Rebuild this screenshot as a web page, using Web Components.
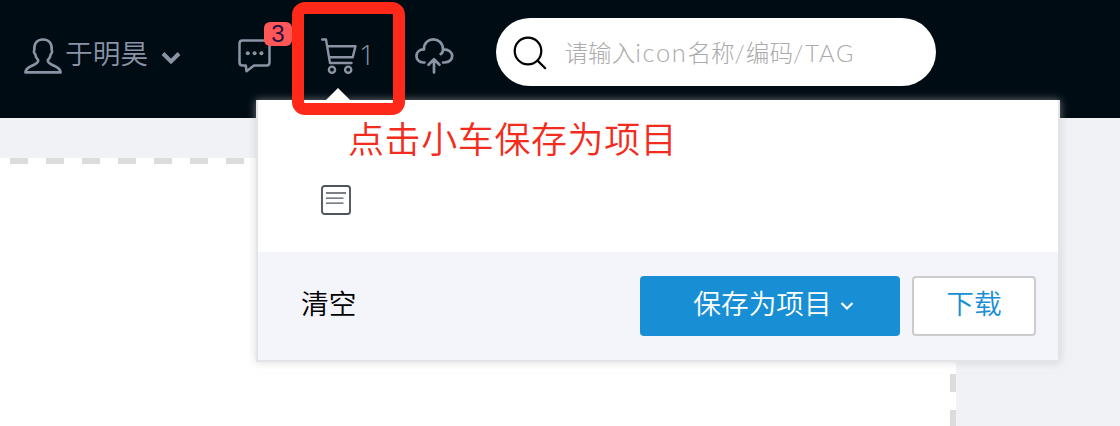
<!DOCTYPE html>
<html lang="zh-CN">
<head>
<meta charset="utf-8">
<title>Icon library</title>
<style>
html,body{margin:0;height:426px;overflow:hidden}
body{background:#f0f2f6;font-family:"Liberation Sans","Noto Sans CJK SC",sans-serif;font-weight:350}
</style>
</head>
<body>
<icon-page>
  <top-bar slot="header">
    <user-menu>于明昊</user-menu>
    <message-button count="3"></message-button>
    <cart-button>
      <cart-panel slot="panel">
        <panel-button slot="actions" primary>保存为项目</panel-button>
        <panel-button slot="actions">下载</panel-button>
        <span slot="note">点击小车保存为项目</span>
        <span slot="clear">清空</span>
      </cart-panel>
      1
    </cart-button>
    <upload-button></upload-button>
    <search-box>请输入<span style="font-family:Lato;font-size:25.5px;letter-spacing:1.6px">icon</span>名称<span style="font-family:Lato;letter-spacing:1px">/</span>编码<span style="font-family:Lato;letter-spacing:1.9px">/TAG</span></search-box>
  </top-bar>
</icon-page>
<script>
const define = (name, html) => customElements.define(name, class extends HTMLElement {
  constructor() {
    super();
    const t = document.createElement('template');
    t.innerHTML = html;
    this.attachShadow({mode: 'open'}).append(t.content.cloneNode(true));
  }
});

define('icon-page', `<style>
:host{display:flex;flex-direction:column;height:426px;background:#f0f2f6}
.canvas{flex:1;width:956px;margin-top:40px;background:#fff;display:flex;justify-content:space-between;flex-direction:column}
.top{height:6px;margin-left:10px;background:repeating-linear-gradient(90deg,#dcdcdc 0 18px,transparent 18px 36px)}
.side{width:6px;flex:1;margin-top:30px;align-self:flex-end;background:repeating-linear-gradient(180deg,transparent 0 0,#dcdcdc 0 18px,transparent 18px 36px)}
</style><slot name="header"></slot><div class="canvas"><div class="top"></div><div class="side"></div></div>`);

define('top-bar', `<style>
:host{display:flex;flex:none;height:118px;box-sizing:border-box;padding-left:24px;background:#000c14;color:#8b93a5;align-items:flex-start}
</style><slot></slot>`);

define('user-menu', `<style>
:host{display:flex;align-items:center;height:36px;margin-top:38px;width:214px;font-size:27.7px;line-height:36px}
.name{margin:-2px 13px 0 3px;white-space:nowrap}
svg{display:block;flex:none}
</style><svg width="38" height="36" fill="none" stroke="currentColor" stroke-width="2.6" stroke-linejoin="round"><path d="M19 1.5C12.5 1.5 9.8 6 10.4 12C9.5 12.2 9.8 15 11.1 16C11.6 19 13 21 14.2 22.2C14.6 25.5 11 26.2 7.8 27.7C3.6 29.6 1.5 31.4 1.4 34.4H36.6C36.5 31.4 34.4 29.6 30.2 27.7C27 26.2 23.4 25.5 23.8 22.2C25 21 26.4 19 26.9 16C28.2 15 28.5 12.2 27.6 12C28.2 6 25.5 1.5 19 1.5Z"/></svg><span class="name"><slot></slot></span><svg width="20" height="14" style="margin-top:4px" fill="none" stroke="currentColor" stroke-width="4"><path d="M2 2.5L10 10.5L18 2.5"/></svg>`);

customElements.define('message-button', class extends HTMLElement {
  constructor() {
    super();
    this.attachShadow({mode: 'open'}).innerHTML = `<style>
:host{display:block;position:relative;width:83px;margin-top:39px}
svg{display:block}
b{position:absolute;left:26px;top:-17px;width:28px;height:24px;border-radius:6px;background:#ff5658;color:#29113f;font-weight:300;font-size:24px;line-height:24px;text-align:center}
</style><svg width="34" height="35" fill="none" stroke="currentColor" stroke-width="2.5" stroke-linejoin="round"><path d="M4.5 1.5H28.5Q31.5 1.5 31.5 4.5V23.5Q31.5 26.5 28.5 26.5H16L8.5 32.2L7.8 26.5H4.5Q1.5 26.5 1.5 23.5V4.5Q1.5 1.5 4.5 1.5Z"/><g fill="currentColor" stroke="none"><circle cx="9.8" cy="14.3" r="2"/><circle cx="16.6" cy="14.3" r="2"/><circle cx="23.4" cy="14.3" r="2"/></g></svg><b></b>`;
    this.shadowRoot.querySelector('b').textContent = this.getAttribute('count');
  }
});

define('cart-button', `<style>
:host{display:flex;position:relative;width:94px;height:36px;margin-top:38px;font-size:28px;line-height:32px}
svg{display:block;flex:none}
.count{font-family:"Open Sans";font-weight:300;margin-left:2px;line-height:33px}
.frame{position:absolute;z-index:3;left:-29px;top:-36px;width:113px;height:113px;box-sizing:border-box;border:12px solid #ff291a;border-radius:13px}
.arrow{position:absolute;z-index:2;left:4px;top:50px;width:26px;height:13px;background:#fff;clip-path:polygon(0 100%,50% 0,100% 100%)}
</style><svg width="36" height="36" fill="none" stroke="currentColor" stroke-width="2.4" stroke-linecap="round" stroke-linejoin="round"><path d="M1.2 1.5H5L9 25H30.5M6.2 8.3H34.5L31.7 19.2H8.2"/><circle cx="11" cy="31.7" r="3.1"/><circle cx="27.2" cy="31.7" r="3.1"/></svg><span class="count"><slot></slot></span><i class="frame"></i><i class="arrow"></i><slot name="panel"></slot>`);

define('upload-button', `<style>
:host{display:block;width:81px;margin-top:38px}svg{display:block}
</style><svg width="39" height="36" fill="none" stroke="currentColor" stroke-width="2.7" stroke-linecap="round" stroke-linejoin="round"><path d="M9.5 24.5H8.5C-1 24-1 11.5 9 11.4C8.6-2 27.7-2 28 11.4C40 11 40 24.2 29.5 24.5H28M19 34.5V22M13.5 26.8L19 21.2L24.5 26.8M28 11.4Q28 14.6 25.7 16"/></svg>`);

define('search-box', `<style>
:host{display:flex;align-items:center;box-sizing:border-box;width:440px;height:68px;margin-top:18px;padding-left:17px;border-radius:34px;background:#fff;color:#aaa;font-size:23.6px;line-height:34px;white-space:nowrap}
svg{display:block;margin:2px 17.5px 0 0}
div{font-weight:300;height:34px}
</style><svg width="34" height="34" fill="none" stroke="#000" stroke-width="2.2" stroke-linecap="round"><circle cx="15" cy="15" r="13.3"/><path d="M24.6 24.6L32.2 32.2"/></svg><div><slot></slot></div>`);

define('cart-panel', `<style>
:host{position:absolute;z-index:1;left:-65px;top:62px;width:804px;height:262px;box-sizing:border-box;border:2px solid #e2e4e8;border-top:0;background:#fff;box-shadow:0 0 8px rgba(190,190,190,.6);display:flex;flex-direction:column}
.body{height:152px;box-sizing:border-box;padding:17px 0 0 63px;display:flex;flex-direction:column}
.note{color:#f22d20;font-size:36px;letter-spacing:.6px;line-height:48px;margin-left:27px;white-space:nowrap}
svg{display:block;margin-top:20px}
.foot{flex:1;background:#f4f5fa;display:flex;align-items:center;gap:12px;padding:0 22px 0 43px}
.clear{flex:1;color:#000;font-size:27.7px;margin-top:-2px}
</style><div class="body"><div class="note"><slot name="note"></slot></div><svg width="30" height="30" fill="none" stroke="#505660" stroke-width="1.9"><rect x="1" y="1" width="28" height="28" rx="2.6"/><path stroke-width="1.3" d="M5 8H25M5 13.1H22.5M5 18.1H22.5"/></svg></div><div class="foot"><div class="clear"><slot name="clear"></slot></div><slot name="actions"></slot></div>`);

define('panel-button', `<style>
:host{display:flex;align-items:center;justify-content:center;box-sizing:border-box;width:124px;height:60px;border:2px solid #ccc;border-radius:4px;background:#fff;color:#188fd4;font-size:27.7px;line-height:36px;white-space:nowrap}
:host([primary]){width:260px;border:0;background:#188fd4;color:#fff}
span{margin-top:-3px}
svg{display:none;margin:0 -7px 0 8px}
:host([primary]) svg{display:block}
</style><span><slot></slot></span><svg width="14" height="10" fill="none" stroke="currentColor" stroke-width="2.2"><path d="M1.5 2L7 7.5L12.5 2"/></svg>`);
</script>
</body>
</html>
